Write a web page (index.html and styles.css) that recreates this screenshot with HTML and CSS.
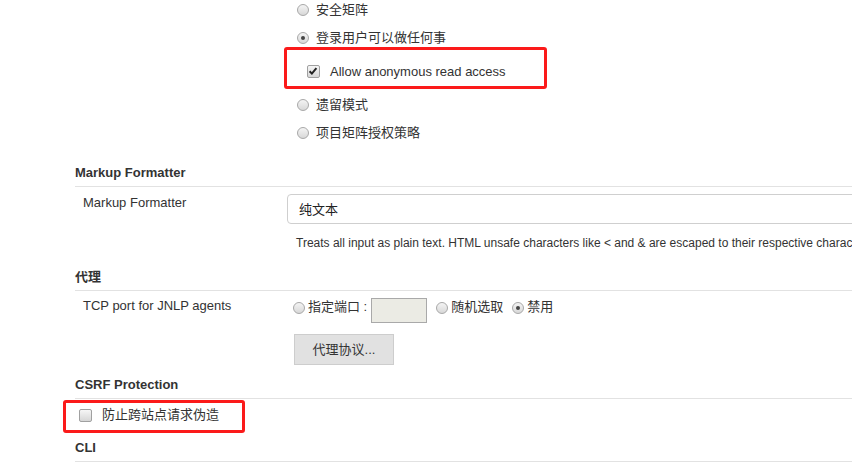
FILE: index.html
```html
<!DOCTYPE html>
<html lang="zh">
<head>
<meta charset="utf-8">
<title>Configure Global Security</title>
<link rel="stylesheet" href="styles.css">
</head>
<body>
<div class="page">
  <div class="realm">
    <div class="opt"><span class="radio"></span><span>安全矩阵</span></div>
    <div class="opt opt-2"><span class="radio on"></span><span>登录用户可以做任何事</span></div>
    <div class="mark mark-1">
      <span class="check on"><svg viewBox="0 0 12 12" width="12" height="12"><path d="M2.6 6.2 L4.9 8.6 L9.4 3.2" fill="none" stroke="#222" stroke-width="2"/></svg></span>
      <span>Allow anonymous read access</span>
    </div>
    <div class="opt opt-3"><span class="radio"></span><span>遗留模式</span></div>
    <div class="opt opt-2"><span class="radio"></span><span>项目矩阵授权策略</span></div>
  </div>

  <div class="section-head head-markup">Markup Formatter</div>
  <div class="row row-markup">
    <div class="label">Markup Formatter</div>
    <div class="value">
      <div class="select">纯文本</div>
      <div class="desc">Treats all input as plain text. HTML unsafe characters like &lt; and &amp; are escaped to their respective character entities.</div>
    </div>
  </div>

  <div class="section-head head-proxy">代理</div>
  <div class="row row-tcp">
    <div class="label">TCP port for JNLP agents</div>
    <div class="value value-tcp">
      <div class="port-line">
        <span class="radio sm"></span><span class="t">指定端口 :</span>
        <span class="port-box"></span>
        <span class="radio sm"></span><span class="t">随机选取</span>
        <span class="radio sm on"></span><span class="t">禁用</span>
      </div>
      <div class="btn">代理协议...</div>
    </div>
  </div>

  <div class="section-head head-csrf">CSRF Protection</div>
  <div class="mark mark-2">
    <span class="check"></span>
    <span>防止跨站点请求伪造</span>
  </div>

  <div class="section-head head-cli">CLI</div>
</div>
</body>
</html>
```

FILE: styles.css
```css
html, body {
  margin: 0;
  padding: 0;
  background: #fff;
  overflow: hidden;
}
body {
  font-family: "Liberation Sans", Arial, "Noto Sans CJK SC", sans-serif;
  font-size: 13px;
  color: #333;
  line-height: 18px;
}
.page {
  padding-left: 75px;
  width: 1100px;
}

/* radio list */
.realm {
  margin-left: 222px;
  margin-top: 1px;
  display: flex;
  flex-direction: column;
}
.opt {
  display: flex;
  align-items: center;
  height: 18px;
  gap: 7px;
}
.opt-2 { margin-top: 10px; }
.opt-3 { margin-top: 7px; }

.radio {
  width: 10px;
  height: 10px;
  border-radius: 50%;
  border: 1px solid #a8a8a8;
  background: linear-gradient(#f4f4f4, #d8d8d8);
  box-sizing: content-box;
  flex: none;
  position: relative;
}
.radio.on::after {
  content: "";
  position: absolute;
  left: 3px;
  top: 3px;
  width: 4px;
  height: 4px;
  border-radius: 50%;
  background: #444;
}
.check {
  width: 11px;
  height: 11px;
  border: 1px solid #a0a0a0;
  border-radius: 2px;
  background: linear-gradient(#f6f6f6, #d6d6d6);
  flex: none;
  display: flex;
}
.check svg { display: block; margin: -1px 0 0 -1px; }

/* red annotation boxes */
.mark {
  display: flex;
  align-items: center;
  border: 3px solid #fb1a1a;
  border-radius: 3px;
  box-sizing: border-box;
}
.mark-1 {
  margin-left: -13px;
  width: 263px;
  height: 42px;
  padding: 7px 0 0 20px;
  gap: 10px;
}
.mark-2 {
  margin-left: -12px;
  margin-top: 1px;
  width: 182px;
  height: 33px;
  padding: 0 0 3px 13px;
  gap: 10px;
}

/* sections */
.section-head {
  font-weight: bold;
  padding-bottom: 4px;
  border-bottom: 1px solid #e2e2e2;
}
.head-markup { margin-top: 22px; }
.head-proxy { margin-top: 17px; }
.head-csrf { margin-top: 11px; }
.head-cli { margin-top: 6px; }

.row {
  display: grid;
  grid-template-columns: 204px 1fr;
  padding-left: 8px;
}
.row-markup { margin-top: 6px; }
.row-markup .label { padding-top: 1px; }
.select {
  margin-top: 1px;
  width: 640px;
  height: 30px;
  border: 1px solid #cfcfcf;
  border-radius: 4px;
  box-sizing: border-box;
  padding: 2px 0 0 11px;
  display: flex;
  align-items: center;
  color: #222;
}
.desc {
  margin-top: 11px;
  padding-left: 9px;
  font-size: 12px;
  line-height: 16px;
  white-space: nowrap;
}

.row-tcp { margin-top: 6px; }
.value-tcp { padding-top: 1px; }
.port-line {
  display: flex;
  align-items: flex-start;
  padding-left: 6px;
}
.port-line .radio { margin-top: 4px; }
.port-line .t { margin-left: 3px; }
.port-box {
  width: 54px;
  height: 23px;
  background: #ebebe4;
  border: 1px solid #a9a9a9;
  margin: 0 9px 0 4px;
}
.port-line .t + .radio { margin-left: 9px; }
.btn {
  margin: 11px 0 0 7px;
  width: 100px;
  height: 31px;
  box-sizing: border-box;
  background: #e1e1e1;
  border: 1px solid #cdcdcd;
  display: flex;
  align-items: center;
  justify-content: center;
  color: #333;
}
```
